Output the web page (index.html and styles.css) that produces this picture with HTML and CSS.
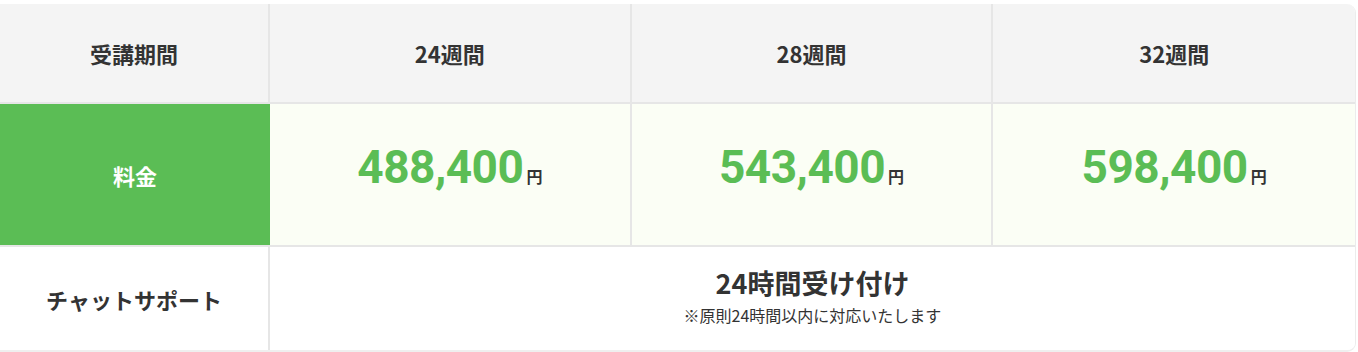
FILE: index.html
```html
<!DOCTYPE html>
<html lang="ja">
<head>
<meta charset="utf-8">
<link rel="stylesheet" href="styles.css">
</head>
<body>
<div class="wrap">
  <div class="plan">
    <div class="cell head label">受講期間</div>
    <div class="cell head">24週間</div>
    <div class="cell head">28週間</div>
    <div class="cell head last">32週間</div>

    <div class="cell price-label">料金</div>
    <div class="cell price"><span class="num">488,400</span><span class="yen">円</span></div>
    <div class="cell price"><span class="num">543,400</span><span class="yen">円</span></div>
    <div class="cell price last"><span class="num">598,400</span><span class="yen">円</span></div>

    <div class="cell chat-label">チャットサポート</div>
    <div class="cell chat">
      <div class="chat-main">24時間受け付け</div>
      <div class="chat-note">※原則24時間以内に対応いたします</div>
    </div>
  </div>
</div>
</body>
</html>
```

FILE: styles.css
```css
* { box-sizing: border-box; }
body {
  margin: 0;
  background: #ffffff;
  font-family: "Noto Sans CJK JP", "Noto Sans", sans-serif;
  color: #333333;
}
.wrap {
  padding-top: 4px;
  width: 1356px;
}
.plan {
  display: grid;
  grid-template-columns: 270px repeat(3, 1fr);
  grid-template-rows: 100px 143px 103px;
  border-radius: 0 9px 9px 0;
  overflow: hidden;
  border-right: 1px solid #ececec;
  border-bottom: 2px solid #efefef;
}
.cell {
  display: flex;
  align-items: center;
  justify-content: center;
  border-right: 2px solid #e6e6e6;
  border-bottom: 2px solid #e6e6e6;
}
.cell.last { border-right: none; }
.head {
  background: #f4f4f4;
  font-size: 22px;
  font-weight: 700;
  color: #333;
}
.price-label {
  background: #5bbd55;
  color: #fff;
  font-size: 22px;
  font-weight: 700;
  border-right: none;
  border-bottom-color: #e6e6e6;
}
.price {
  background: #fbfef5;
  align-items: baseline;
  padding-top: 36px;
}
.num {
  font-family: Roboto, "Liberation Sans", sans-serif;
  font-weight: 700;
  font-size: 46px;
  color: #5bbd55;
  letter-spacing: -0.5px;
}
.yen {
  font-size: 16px;
  font-weight: 700;
  color: #333;
  margin-left: 3px;
}
.chat-label {
  background: #fff;
  font-size: 22px;
  font-weight: 700;
  border-bottom: none;
}
.chat {
  grid-column: 2 / 5;
  background: #fff;
  flex-direction: column;
  border-right: none;
  border-bottom: none;
  padding-bottom: 6px;
}
.chat-main {
  font-size: 27px;
  font-weight: 700;
  line-height: 36px;
}
.chat-note {
  font-size: 16px;
  line-height: 24px;
  margin-top: 2px;
}
```
